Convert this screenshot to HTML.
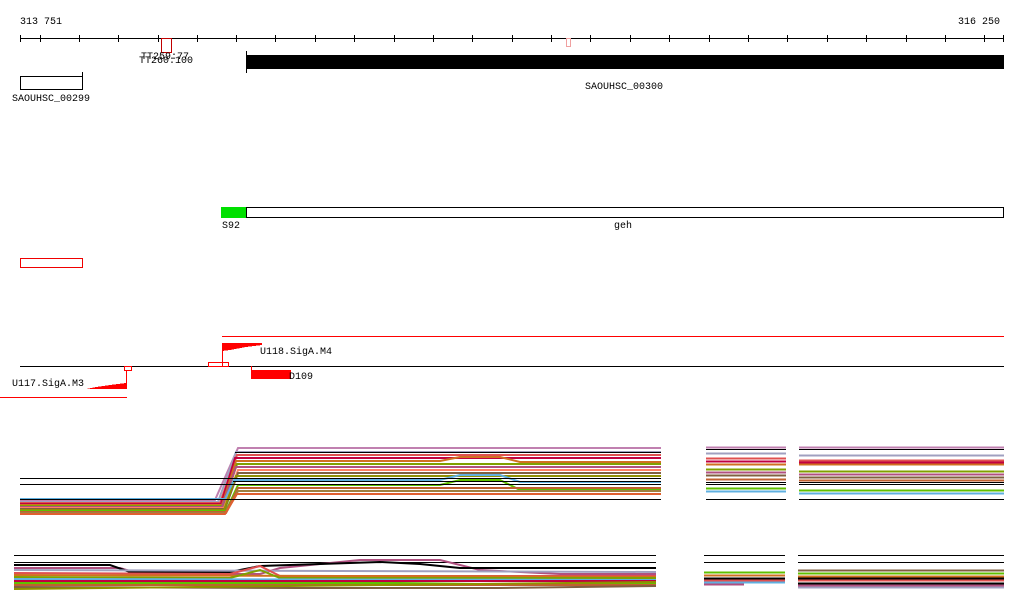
<!DOCTYPE html>
<html><head><meta charset="utf-8"><style>
body{margin:0;background:#fff;width:1024px;height:611px;overflow:hidden}
svg{display:block}
text{font-family:"Liberation Mono","DejaVu Sans Mono",monospace;font-size:10px;fill:#000}
</style></head><body>
<svg width="1024" height="611" viewBox="0 0 1024 611" shape-rendering="crispEdges">
<text x="20" y="24">313 751</text>
<text x="958" y="24">316 250</text>
<line x1="20" y1="38.5" x2="1004" y2="38.5" stroke="#000"/>
<g stroke="#000">
<path d="M20.5 35v7M40.5 35v7M79.5 35v7M118.5 35v7M158.5 35v7M197.5 35v7M236.5 35v7M275.5 35v7M315.5 35v7M354.5 35v7M394.5 35v7M433.5 35v7M472.5 35v7M512.5 35v7M551.5 35v7M590.5 35v7M630.5 35v7M669.5 35v7M709.5 35v7M748.5 35v7M787.5 35v7M827.5 35v7M866.5 35v7M906.5 35v7M945.5 35v7M984.5 35v7M1003.5 35v7"/>
</g>
<rect x="161.5" y="38.5" width="10" height="14" fill="none" stroke="#c00000"/>
<rect x="566.5" y="38.5" width="4" height="8" fill="none" stroke="#f0a0a0"/>
<text x="141" y="59">TT259:77</text>
<text x="139" y="63">TT260:100</text>
<rect x="246" y="55" width="758" height="14" fill="#000"/>
<line x1="246.5" y1="51" x2="246.5" y2="73" stroke="#000"/>
<text x="585" y="89">SAOUHSC_00300</text>
<rect x="20.5" y="76.5" width="62" height="13" fill="none" stroke="#000"/>
<line x1="82.5" y1="72" x2="82.5" y2="90" stroke="#000"/>
<text x="12" y="101">SAOUHSC_00299</text>
<rect x="221" y="207" width="25" height="11" fill="#00e000"/>
<rect x="246.5" y="207.5" width="757" height="10" fill="none" stroke="#000"/>
<text x="222" y="228">S92</text>
<text x="614" y="228">geh</text>
<rect x="20.5" y="258.5" width="62" height="9" fill="none" stroke="#f00000"/>
<line x1="222" y1="336.5" x2="1004" y2="336.5" stroke="#f00"/>
<polygon points="222,343 262,343 262,345 246,347 230,350 222,351" fill="#f00"/>
<line x1="222.5" y1="343" x2="222.5" y2="366" stroke="#f00"/>
<text x="260" y="354">U118.SigA.M4</text>
<line x1="20" y1="366.5" x2="1004" y2="366.5" stroke="#000"/>
<rect x="208.5" y="362.5" width="20" height="4" fill="none" stroke="#f00"/>
<rect x="124.5" y="366.5" width="7" height="4" fill="none" stroke="#f00"/>
<line x1="126.5" y1="370" x2="126.5" y2="389" stroke="#f00"/>
<polygon points="86,389 126,389 126,383 110,385 96,387" fill="#f00"/>
<line x1="0" y1="397.5" x2="127" y2="397.5" stroke="#f00"/>
<text x="12" y="386">U117.SigA.M3</text>
<rect x="251" y="370" width="40" height="9" fill="#f00"/>
<line x1="251.5" y1="366" x2="251.5" y2="379" stroke="#f00"/>
<text x="289" y="379">D109</text>
<g fill="none" stroke-width="2" shape-rendering="auto">
<polyline stroke="#c080b0" points="20,500 215,500 238,448 661,448"/>
<polyline stroke="#a0a0c0" points="20,502 218,502 236,452 661,452"/>
<polyline stroke="#e05050" points="20,503 220,503 237,455 661,455"/>
<polyline stroke="#c00040" points="20,504 221,504 235,458 661,458"/>
<polyline stroke="#d07020" points="20,505 222,505 236,461 440,461 460,457 500,457 520,462 661,462"/>
<polyline stroke="#80a000" points="20,506 223,506 237,464 661,464"/>
<polyline stroke="#b05080" points="20,507 222,507 236,467 661,467"/>
<polyline stroke="#ff8060" points="20,508 224,508 238,470 661,470"/>
<polyline stroke="#806040" points="20,509 225,509 238,473 661,473"/>
<polyline stroke="#909000" points="20,510 224,510 236,476 661,476"/>
<polyline stroke="#60b0e0" points="20,499 225,499 234,480 440,480 460,475 500,475 520,482 661,482"/>
<polyline stroke="#60c000" points="20,511 226,511 238,485 440,485 460,480 500,480 520,490 661,490"/>
<polyline stroke="#c06030" points="20,512 226,512 238,488 661,488"/>
<polyline stroke="#a08040" points="20,513 226,513 238,491 661,491"/>
<polyline stroke="#e06030" points="20,514 225,514 237,494 661,494"/>
</g>
<g stroke="#000"><path d="M20 478.5h641M20 484.5h641M20 499.5h641M235 452.5h426M233 481.5h428"/></g>
<g stroke-width="2">
<path stroke="#c080b0" d="M706 447.5h80M799 447.5h205"/>
<path stroke="#a0a0c0" d="M706 453.5h80M799 455.5h205"/>
<path stroke="#e05050" d="M706 458.5h80M799 460.5h205"/>
<path stroke="#c00040" d="M706 461.5h80M799 462.5h205"/>
<path stroke="#d07020" d="M706 464.5h80M799 464.5h205"/>
<path stroke="#80a000" d="M706 469.5h80M799 471.5h205"/>
<path stroke="#b05080" d="M706 472.5h80M799 474.5h205"/>
<path stroke="#806040" d="M706 475.5h80M799 477.5h205"/>
<path stroke="#c06030" d="M706 479.5h80M799 480.5h205"/>
<path stroke="#60c000" d="M706 488.5h80M799 490.5h205"/>
<path stroke="#60b0e0" d="M706 491.5h80M799 493.5h205"/>
</g>
<g stroke="#000"><path d="M706 449.5h80M799 449.5h205M706 499.5h80M799 499.5h205M706 484.5h80M799 484.5h205M706 482.5h80M799 482.5h205"/></g>
<g stroke="#000"><path d="M14 555.5h642M14 562.5h642M704 555.5h81M704 562.5h81M798 555.5h206M798 562.5h206"/></g>
<g fill="none" stroke-width="2" shape-rendering="auto">
<polyline stroke="#b05080" points="14,568 120,568 140,574 260,574 280,568 360,560 440,560 480,570 560,574 656,574"/>
<polyline stroke="#000" points="14,565 110,565 130,572 230,572 260,566 380,562 420,564 460,568 656,568"/>
<polyline stroke="#a0a0c0" points="14,570 656,572"/>
<polyline stroke="#e05050" points="14,573 230,574 260,566 280,576 656,576"/>
<polyline stroke="#d07020" points="14,575 656,577"/>
<polyline stroke="#80a000" points="14,577 230,578 260,570 280,578 656,578"/>
<polyline stroke="#60b0e0" points="14,579 656,580"/>
<polyline stroke="#c00040" points="14,581 656,581"/>
<polyline stroke="#60c000" points="14,583 400,583 560,585 656,583"/>
<polyline stroke="#c06030" points="14,585 656,585"/>
<polyline stroke="#806040" points="14,587 300,588 500,588 656,586"/>
<polyline stroke="#909000" points="14,589 656,582"/>
</g>
<g stroke-width="2">
<path stroke="#60c000" d="M704 572.5h81M798 573.5h206"/>
<path stroke="#d07020" d="M704 575.5h81M798 576.5h206"/>
<path stroke="#e05050" d="M704 580.5h81M798 580.5h206"/>
<path stroke="#60b0e0" d="M704 582.5h81M798 578.5h206"/>
<path stroke="#b05080" d="M704 584.5h40M798 585.5h206"/>
<path stroke="#806040" d="M798 570.5h206"/>
<path stroke="#a0a0c0" d="M798 587.5h206"/>
<path stroke="#000" d="M704 578.5h81M798 578.5h206M798 583.5h206"/>
</g>
</svg>
</body></html>
